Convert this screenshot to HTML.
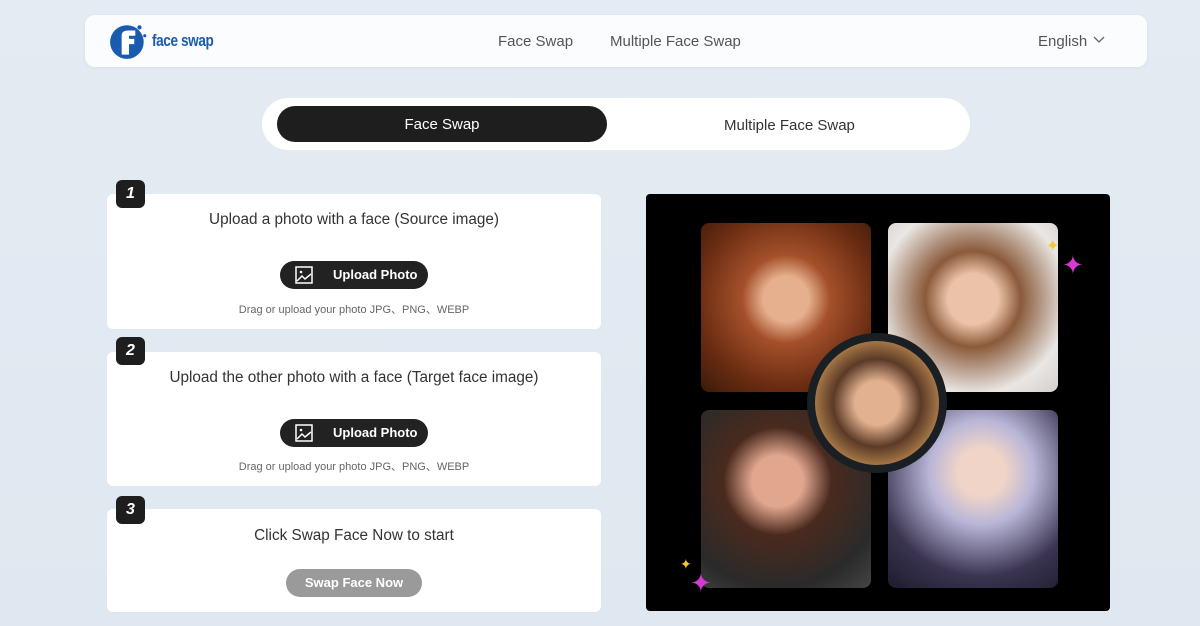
<!DOCTYPE html>
<html><head><meta charset="utf-8"><style>
*{margin:0;padding:0;box-sizing:border-box}
body{width:1200px;height:626px;overflow:hidden;background:linear-gradient(180deg,#e4ebf3,#dfe7f0);font-family:"Liberation Sans",sans-serif;position:relative;color:#333}
.abs{position:absolute}
.hdr{left:85px;top:15px;width:1062px;height:52px;background:#fbfcfe;border-radius:10px;box-shadow:0 1px 4px rgba(0,0,0,.05)}
.nav{font-size:15px;color:#555;top:33px}
.tabs{left:262px;top:98px;width:708px;height:52px;background:#fff;border-radius:26px}
.act{left:277px;top:106px;width:330px;height:36px;background:#1e1e1e;border-radius:18px;color:#fff;font-size:15px;text-align:center;line-height:38px}
.card{left:107px;width:494px;background:#fff;border-radius:6px}
.badge{left:116px;width:29px;height:28px;background:#1e1e1e;border-radius:6px;color:#fff;font-weight:bold;font-style:italic;font-size:16px;text-align:center;line-height:28px}
.t{left:107px;width:494px;text-align:center;font-size:15.3px;color:#333}
.btn{left:280px;width:148px;height:28px;background:#222;border-radius:14px;color:#fff;font-weight:bold;font-size:13px;line-height:28px;padding-left:53px}
.btn svg{position:absolute;left:15px;top:5px}
.s{left:107px;width:494px;text-align:center;font-size:11px;color:#666}
.ph{border-radius:8px}
</style></head><body>
<div class="abs hdr"></div>
<svg class="abs" style="left:108px;top:21px" width="42" height="40" viewBox="0 0 40 38"><circle cx="18" cy="20" r="16" fill="#1a5bb0"/><circle cx="30" cy="6" r="2" fill="#1a5bb0"/><circle cx="35" cy="14" r="1.5" fill="#1a5bb0"/><path d="M13 32V14q0-5 6-5h7v5h-6v3h5v5h-5v10z" fill="#fff"/></svg>
<div class="abs" style="left:152px;top:31px;color:#1a5bb0;font-size:17px;font-weight:bold;letter-spacing:-.5px;transform:scaleX(.8);transform-origin:left">face swap</div>
<div class="abs nav" style="left:498px">Face Swap</div>
<div class="abs nav" style="left:610px">Multiple Face Swap</div>
<div class="abs nav" style="left:1038px">English</div>
<svg class="abs" style="left:1093px;top:36px" width="12" height="8"><path d="M1 1l5 5 5-5" stroke="#666" fill="none" stroke-width="1.3"/></svg>
<div class="abs tabs"></div>
<div class="abs act">Face Swap</div>
<div class="abs" style="left:724px;top:117px;font-size:15px;color:#333">Multiple Face Swap</div>

<div class="abs card" style="top:194px;height:135px"></div>
<div class="abs card" style="top:352px;height:134px"></div>
<div class="abs card" style="top:509px;height:103px"></div>
<div class="abs badge" style="top:180px">1</div>
<div class="abs badge" style="top:337px">2</div>
<div class="abs badge" style="top:496px">3</div>
<div class="abs t" style="top:211px">Upload a photo with a face (Source image)</div>
<div class="abs t" style="top:369px">Upload the other photo with a face (Target face image)</div>
<div class="abs t" style="top:527px">Click Swap Face Now to start</div>
<div class="abs btn" style="top:261px"><svg width="18" height="18"><rect x="1" y="1" width="16" height="16" fill="none" stroke="#fff" stroke-width="1.5"/><path d="M2 15l5-5 3 3 6-5" stroke="#fff" fill="none" stroke-width="1.5"/><circle cx="6" cy="6" r="1.3" fill="#fff"/></svg>Upload Photo</div>
<div class="abs btn" style="top:419px"><svg width="18" height="18"><rect x="1" y="1" width="16" height="16" fill="none" stroke="#fff" stroke-width="1.5"/><path d="M2 15l5-5 3 3 6-5" stroke="#fff" fill="none" stroke-width="1.5"/><circle cx="6" cy="6" r="1.3" fill="#fff"/></svg>Upload Photo</div>
<div class="abs s" style="top:301px">Drag or upload your photo JPG、PNG、WEBP</div>
<div class="abs s" style="top:458px">Drag or upload your photo JPG、PNG、WEBP</div>
<div class="abs" style="left:286px;top:569px;width:136px;height:28px;background:#9a9a9a;border-radius:14px;color:#fff;font-weight:bold;font-size:13px;text-align:center;line-height:28px">Swap Face Now</div>

<div class="abs" style="left:646px;top:194px;width:464px;height:417px;background:#000;border-radius:4px"></div>
<div class="abs ph" style="left:701px;top:223px;width:170px;height:169px;background:radial-gradient(circle at 50% 45%,#e6b08e 0 18%,#a4502a 35%,#6a2c12 70%,#3a1a0a)"></div>
<div class="abs ph" style="left:888px;top:223px;width:170px;height:169px;background:radial-gradient(circle at 50% 45%,#ecc3a8 0 20%,#8a5a3a 38%,#e9e6e3 75%,#d4d0cc)"></div>
<div class="abs ph" style="left:701px;top:410px;width:170px;height:178px;background:radial-gradient(circle at 45% 40%,#e1a68e 0 18%,#4a2a1e 38%,#2a2a2a 75%,#444)"></div>
<div class="abs ph" style="left:888px;top:410px;width:170px;height:178px;background:radial-gradient(circle at 55% 35%,#f0d4c8 0 16%,#b9b6d8 35%,#3a3450 70%,#1d1b2e)"></div>
<div class="abs" style="left:807px;top:333px;width:140px;height:140px;border-radius:50%;background:radial-gradient(circle at 50% 50%,#e2b18f 0 25%,#5b3a26 50%,#c69155 80%);border:8px solid #1a1f24"></div>
<div class="abs" style="left:1062px;top:250px;color:#d43ad2;font-size:26px">✦</div>
<div class="abs" style="left:1046px;top:236px;color:#f2c83a;font-size:16px">✦</div>
<div class="abs" style="left:690px;top:568px;color:#d43ad2;font-size:26px">✦</div>
<div class="abs" style="left:680px;top:556px;color:#f2c83a;font-size:14px">✦</div>
</body></html>
